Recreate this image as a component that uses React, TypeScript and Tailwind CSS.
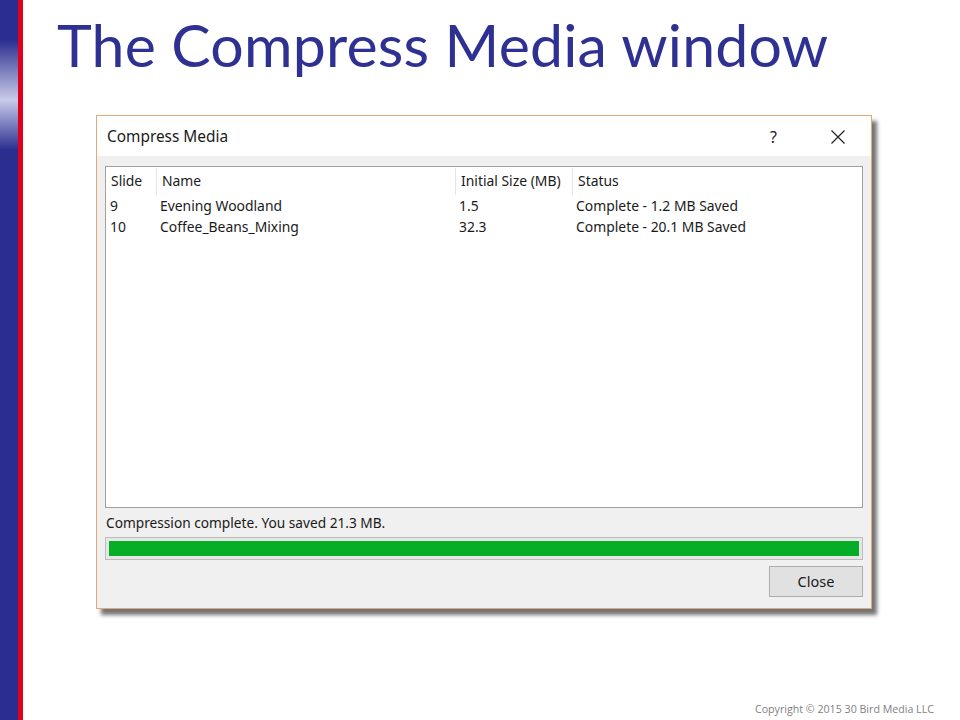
import React from "react";

const ROWS = [
  { slide: "9", name: "Evening Woodland", size: "1.5", status: "Complete - 1.2 MB Saved" },
  { slide: "10", name: "Coffee_Beans_Mixing", size: "32.3", status: "Complete - 20.1 MB Saved" },
];

const COLS = "grid grid-cols-[50px_299px_117px_1fr]";

export default function App() {
  return (
    <div className="w-[960px] h-[720px] bg-white flex overflow-hidden font-['Open_Sans',sans-serif]">
      {/* slide edge */}
      <div className="flex shrink-0">
        <div className="w-[18px] h-full bg-[linear-gradient(to_bottom,#2b2e8f_0px,#2b2e8f_40px,#c9cbe9_100px,#2b2e8f_150px,#2b2e8f_100%)]" />
        <div className="w-[5px] h-full bg-[#e0001b]" />
      </div>

      <div className="flex-1 flex flex-col relative">
        <h1 className="ml-[34px] mt-[10px] font-['Lato',sans-serif] text-[59px] leading-[70px] text-[#2e3192] tracking-[0.2px]">
          The Compress Media window
        </h1>

        {/* dialog */}
        <div className="ml-[73px] mt-[35px] w-[776px] h-[494px] border border-[#e3a877] bg-[#f0f0f0] flex flex-col shadow-[5px_6px_4px_rgba(0,0,0,0.55)] font-['Noto_Sans',sans-serif]">
          <div className="h-[40px] pt-[1px] bg-white flex items-center pl-[10px] pr-[24px] text-[15.4px] text-[#1a1a1a]">
            <span>Compress Media</span>
            <span className="ml-auto mr-[53px] text-[16px]">?</span>
            <svg width="16" height="16" viewBox="0 0 16 16" className="mr-[1px]">
              <path d="M1.5 1.5 L14.5 14.5 M14.5 1.5 L1.5 14.5" stroke="#222" strokeWidth="1.2" />
            </svg>
          </div>

          <div className="flex-1 flex flex-col px-[8px] pt-[10px]">
            <div className="h-[342px] bg-white border border-[#a0a0a0] text-[13.9px] text-[#1a1a1a]">
              <div className={`${COLS} h-[28px] pt-[1px] items-center`}>
                {["Slide", "Name", "Initial Size (MB)", "Status"].map((h, i) => (
                  <div
                    key={h}
                    className={`h-full flex items-center pl-[5px] ${i > 0 ? "border-l border-[#e5e5e5] pl-[4px]" : ""}`}
                  >
                    {h}
                  </div>
                ))}
              </div>
              {ROWS.map((r) => (
                <div key={r.slide} className={`${COLS} h-[21px] items-center leading-[21px]`}>
                  <span className="pl-[4px]">{r.slide}</span>
                  <span className="pl-[4px]">{r.name}</span>
                  <span className="pl-[4px]">{r.size}</span>
                  <span className="pl-[4px]">{r.status}</span>
                </div>
              ))}
            </div>

            <div className="mt-[5px] text-[13.7px] text-[#1a1a1a] leading-[20px] pl-[1px]">
              Compression complete. You saved 21.3 MB.
            </div>

            <div className="mt-[4px] h-[23px] border border-[#bcbcbc] bg-[#e6e6e6] p-[3px]">
              <div className="h-full w-full bg-[#06ad26]" />
            </div>

            <div className="mt-[6px] flex justify-end">
              <button className="w-[94px] h-[31px] bg-[#e1e1e1] border border-[#adadad] text-[14.5px] text-[#1a1a1a]">
                Close
              </button>
            </div>
          </div>
        </div>

        <div className="absolute left-[732px] top-[702px] text-[10.65px] text-[#7f7f7f] font-['Open_Sans',sans-serif]">
          Copyright © 2015 30 Bird Media LLC
        </div>
      </div>
    </div>
  );
}
